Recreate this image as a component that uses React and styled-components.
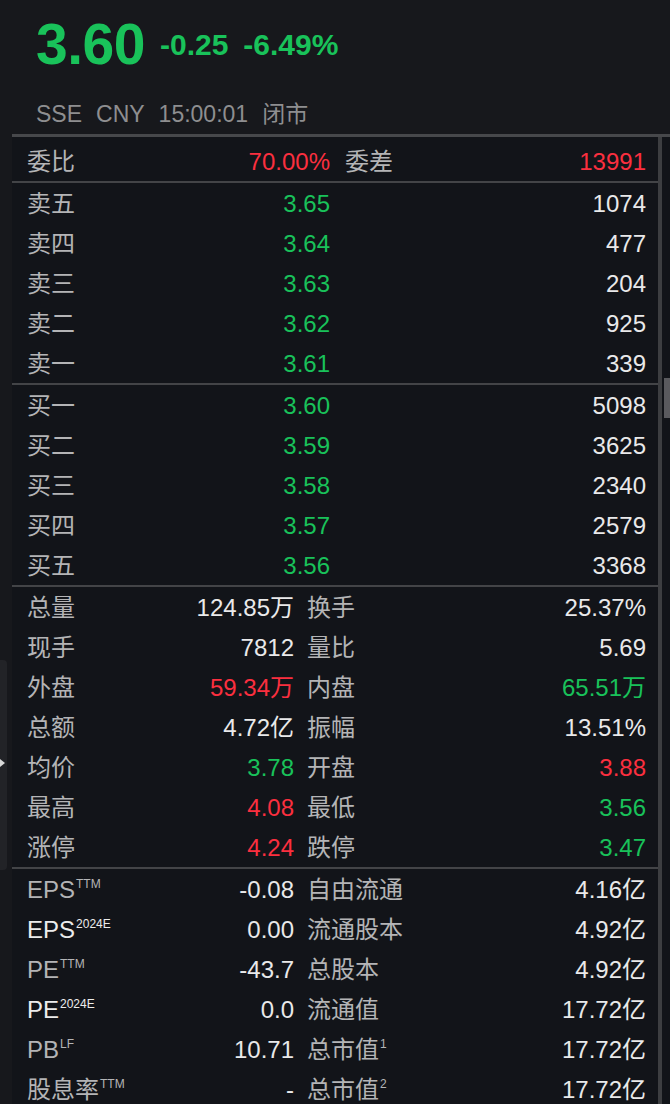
import React from 'react'
import styled, { createGlobalStyle } from 'styled-components'

const GREEN = '#19c25a'
const RED = '#fb2f3f'

const GlobalStyle = createGlobalStyle`
    html, body {
        margin: 0;
        padding: 0;
        background: #17181c;
    }
    body {
        font-family: "Liberation Sans", "Noto Sans CJK SC", sans-serif;
    }
`

const asks = [
    ['卖五', '3.65', '1074'],
    ['卖四', '3.64', '477'],
    ['卖三', '3.63', '204'],
    ['卖二', '3.62', '925'],
    ['卖一', '3.61', '339'],
]

const bids = [
    ['买一', '3.60', '5098'],
    ['买二', '3.59', '3625'],
    ['买三', '3.58', '2340'],
    ['买四', '3.57', '2579'],
    ['买五', '3.56', '3368'],
]

const stats = [
    { l1: '总量', v1: '124.85万', l2: '换手', v2: '25.37%' },
    { l1: '现手', v1: '7812', l2: '量比', v2: '5.69' },
    { l1: '外盘', v1: '59.34万', c1: RED, l2: '内盘', v2: '65.51万', c2: GREEN },
    { l1: '总额', v1: '4.72亿', l2: '振幅', v2: '13.51%' },
    { l1: '均价', v1: '3.78', c1: GREEN, l2: '开盘', v2: '3.88', c2: RED },
    { l1: '最高', v1: '4.08', c1: RED, l2: '最低', v2: '3.56', c2: GREEN },
    { l1: '涨停', v1: '4.24', c1: RED, l2: '跌停', v2: '3.47', c2: GREEN },
]

const valuation = [
    { l1: 'EPS', s1: 'TTM', v1: '-0.08', l2: '自由流通', v2: '4.16亿' },
    { l1: 'EPS', s1: '2024E', bright: true, v1: '0.00', l2: '流通股本', v2: '4.92亿' },
    { l1: 'PE', s1: 'TTM', v1: '-43.7', l2: '总股本', v2: '4.92亿' },
    { l1: 'PE', s1: '2024E', bright: true, v1: '0.0', l2: '流通值', v2: '17.72亿' },
    { l1: 'PB', s1: 'LF', v1: '10.71', l2: '总市值', s2: '1', v2: '17.72亿' },
    { l1: '股息率', s1: 'TTM', v1: '-', l2: '总市值', s2: '2', v2: '17.72亿' },
]

function App() {
    return (
        <Page>
            <GlobalStyle />
            <Header>
                <QuoteRow>
                    <Price>3.60</Price>
                    <Change>-0.25</Change>
                    <Change>-6.49%</Change>
                </QuoteRow>
                <MetaRow>
                    <span>SSE</span>
                    <span>CNY</span>
                    <span>15:00:01</span>
                    <span>闭市</span>
                </MetaRow>
            </Header>
            <Panel>
                <Table>
                    <Section>
                        <Row split={303} gap={15}>
                            <Pair>
                                <Label>委比</Label>
                                <Value color={RED}>70.00%</Value>
                            </Pair>
                            <Pair>
                                <Label>委差</Label>
                                <Value color={RED}>13991</Value>
                            </Pair>
                        </Row>
                    </Section>
                    {[asks, bids].map((book, i) => (
                        <Section key={i}>
                            {book.map(([name, price, vol]) => (
                                <Row key={name} split={303} gap={15}>
                                    <Pair>
                                        <Label>{name}</Label>
                                        <Value color={GREEN}>{price}</Value>
                                    </Pair>
                                    <Pair>
                                        <span />
                                        <Value>{vol}</Value>
                                    </Pair>
                                </Row>
                            ))}
                        </Section>
                    ))}
                    <Section>
                        {stats.map((s) => (
                            <Row key={s.l1} split={267} gap={13}>
                                <Pair>
                                    <Label>{s.l1}</Label>
                                    <Value color={s.c1}>{s.v1}</Value>
                                </Pair>
                                <Pair>
                                    <Label>{s.l2}</Label>
                                    <Value color={s.c2}>{s.v2}</Value>
                                </Pair>
                            </Row>
                        ))}
                    </Section>
                    <Section last>
                        {valuation.map((s, i) => (
                            <Row key={i} split={267} gap={13}>
                                <Pair>
                                    <Label bright={s.bright}>
                                        {s.l1}
                                        <Sup>{s.s1}</Sup>
                                    </Label>
                                    <Value>{s.v1}</Value>
                                </Pair>
                                <Pair>
                                    <Label>
                                        {s.l2}
                                        {s.s2 && <Sup>{s.s2}</Sup>}
                                    </Label>
                                    <Value>{s.v2}</Value>
                                </Pair>
                            </Row>
                        ))}
                    </Section>
                </Table>
                <ScrollTrack>
                    <Thumb />
                </ScrollTrack>
            </Panel>
            <SideHandle>
                <Arrow />
            </SideHandle>
        </Page>
    )
}

const Page = styled.div`
    position: relative;
    width: 670px;
    height: 1104px;
    overflow: hidden;
    background: #17181c;
`

const Header = styled.div`
    box-sizing: border-box;
    height: 134px;
    padding: 16px 0 0 36px;
`

const QuoteRow = styled.div`
    display: flex;
    align-items: center;
    gap: 15px;
    color: ${GREEN};
    font-family: "Liberation Sans", Arial, sans-serif;
    font-weight: bold;
`

const Price = styled.div`
    font-size: 57px;
    line-height: 1;
    letter-spacing: -0.5px;
`

const Change = styled.div`
    font-size: 30px;
    line-height: 1;
`

const MetaRow = styled.div`
    display: flex;
    gap: 14px;
    margin-top: 30px;
    color: #8e8e90;
    font-size: 23px;
    line-height: 1;
`

const Panel = styled.div`
    display: flex;
    margin-left: 12px;
    border-top: 3px solid #47484b;
    background: #121419;
    height: 970px;
`

const Table = styled.div`
    flex: 1;
    padding-top: 4px;
    border-right: 4px solid #3d3e41;
`

const Section = styled.div`
    border-bottom: ${(p) => (p.last ? 'none' : '2px solid #434447')};
`

const Row = styled.div`
    box-sizing: border-box;
    display: grid;
    grid-template-columns: ${(p) => p.split}px 1fr;
    column-gap: ${(p) => p.gap}px;
    align-items: center;
    height: 40px;
    padding: 2px 12px 0 15px;
    font-size: 24px;
    line-height: 1;
`

const Pair = styled.div`
    display: flex;
    justify-content: space-between;
    align-items: center;
    white-space: nowrap;
`

const Label = styled.span`
    color: ${(p) => (p.bright ? '#ececec' : '#b4b4b6')};
`

const Value = styled.span`
    color: ${(p) => p.color || '#e9e9ea'};
`

const Sup = styled.sup`
    font-size: 12px;
    line-height: 1;
    vertical-align: 10px;
    margin-left: 1px;
`

const ScrollTrack = styled.div`
    width: 6px;
    padding-left: 2px;
    background: #121419;
`

const Thumb = styled.div`
    margin-top: 241px;
    height: 40px;
    background: #5a5a5e;
`

const SideHandle = styled.div`
    position: absolute;
    left: 0;
    top: 660px;
    width: 7px;
    height: 210px;
    background: #222327;
    border-radius: 0 4px 4px 0;
`

const Arrow = styled.div`
    position: absolute;
    left: 0;
    top: 99px;
    width: 0;
    height: 0;
    border-top: 4px solid transparent;
    border-bottom: 4px solid transparent;
    border-left: 5px solid #d8d8d8;
`

export default App
